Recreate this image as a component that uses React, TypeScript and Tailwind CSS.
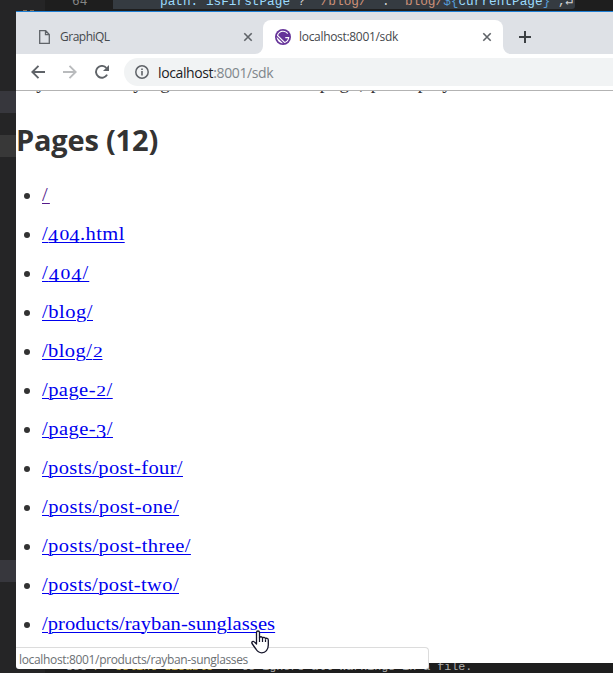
import React from "react";

const serif = "font-['Liberation_Serif',Georgia,serif]";
const sans = "font-['Open_Sans','Segoe_UI',sans-serif]";

function OldStyleDigit({ d }: { d: string }) {
  const low = d === "3" || d === "4";
  return (
    <span className={low ? "relative top-[3px] inline-block" : "inline-block scale-x-[1.25] px-[1.1px] text-[14.5px]"}>
      {d}
    </span>
  );
}

function PageLink({ path, spacing, visited }: { path: string; spacing: string; visited?: boolean }) {
  return (
    <a href="#" className={`mb-[2px] flex origin-left scale-x-[1.08] items-baseline ${spacing} ${visited ? "text-[#551a8b]" : "text-[#0000ee]"}`}>
      {path.split(/(\d+)/).filter(Boolean).map((part, i) =>
        /\d/.test(part) ? (
          <span key={i} className="h-[17px] border-b border-current leading-[16px]">
            {part.split("").map((d, j) => <OldStyleDigit key={j} d={d} />)}
          </span>
        ) : (
          <span key={i} className="leading-[22px] underline decoration-1 underline-offset-[2px]">{part}</span>
        )
      )}
    </a>
  );
}

const pages = [
  { path: "/", spacing: "tracking-[2px]", visited: true },
  { path: "/404.html", spacing: "tracking-[0.36px]" },
  { path: "/404/", spacing: "tracking-[0.95px]" },
  { path: "/blog/", spacing: "tracking-[0.48px]" },
  { path: "/blog/2", spacing: "tracking-[0.37px]" },
  { path: "/page-2/", spacing: "tracking-[0.41px]" },
  { path: "/page-3/", spacing: "tracking-[0.43px]" },
  { path: "/posts/post-four/", spacing: "tracking-[0.35px]" },
  { path: "/posts/post-one/", spacing: "tracking-[0.41px]" },
  { path: "/posts/post-three/", spacing: "tracking-[0.39px]" },
  { path: "/posts/post-two/", spacing: "tracking-[0.34px]" },
  { path: "/products/rayban-sunglasses", spacing: "tracking-[0.06px]" },
];

function Close() {
  return (
    <svg width="10" height="10" viewBox="0 0 10 10" className="shrink-0">
      <path d="M1.3 1.3l7.4 7.4M8.7 1.3L1.3 8.7" stroke="#5f6368" strokeWidth="1.6" />
    </svg>
  );
}

function GatsbyMark() {
  return (
    <svg width="16" height="16" viewBox="0 0 28 28" className="shrink-0">
      <circle cx="14" cy="14" r="14" fill="#639" />
      <path
        fill="#fff"
        d="M6.2 21.8C4.1 19.7 3 16.9 3 14.2L13.9 25c-2.8-.1-5.6-1.1-7.7-3.2zm10.2 2.9L3.3 11.6C4.4 6.7 8.8 3 14 3c3.7 0 6.9 1.8 8.9 4.5l-1.5 1.3C19.7 6.5 17 5 14 5c-3.9 0-7.2 2.5-8.5 6L17 22.5c2.9-1 5.1-3.5 5.8-6.5H18v-2h7c0 5.2-3.7 9.6-8.6 10.7z"
      />
    </svg>
  );
}

function Tabs() {
  return (
    <div className="flex h-[42px] items-end bg-[#dee1e6] text-[#45494d]">
      <div className="flex h-[34px] w-[247px] items-center pr-[10px] pl-[23px]">
        <svg width="11" height="14" viewBox="0 0 11 14" className="mr-[10px] shrink-0" fill="none" stroke="#5f6368" strokeWidth="1.3">
          <path d="M.7.7h6L10.3 4.5v8.8H.7zM6.5.7v4h3.8" />
        </svg>
        <span className="flex-1 text-[12px] tracking-[-0.5px]">GraphiQL</span>
        <Close />
      </div>
      <div className="relative flex h-[34px] w-[240px] items-center rounded-t-[8px] bg-white pr-[11px] pl-[12px]">
        <svg width="8" height="8" viewBox="0 0 8 8" className="absolute bottom-0 -left-2"><path d="M8 0v8H0a8 8 0 008-8z" fill="#fff" /></svg>
        <svg width="8" height="8" viewBox="0 0 8 8" className="absolute -right-2 bottom-0"><path d="M0 0v8h8a8 8 0 01-8-8z" fill="#fff" /></svg>
        <GatsbyMark />
        <span className="ml-[8px] flex-1 text-[12px] tracking-[-0.31px]">localhost:8001/sdk</span>
        <Close />
      </div>
      <svg width="12" height="12" viewBox="0 0 12 12" className="mb-[11px] ml-[16px]">
        <path d="M6 0v12M0 6h12" stroke="#3c4043" strokeWidth="2" />
      </svg>
    </div>
  );
}

function Toolbar() {
  return (
    <div className="flex h-[37px] items-center border-b border-[#b3b3b3] bg-white">
      <svg width="14" height="14" viewBox="0 0 14 14" className="ml-[15px]" fill="none" stroke="#5f6368" strokeWidth="1.9">
        <path d="M14 7H1.5M7.5 .8L1.3 7l6.2 6.2" />
      </svg>
      <svg width="14" height="14" viewBox="0 0 14 14" className="ml-[18px]" fill="none" stroke="#b9bbbd" strokeWidth="1.9">
        <path d="M0 7h12.5M6.5 .8L12.7 7l-6.2 6.2" />
      </svg>
      <svg width="14" height="14" viewBox="0 0 14 14" className="ml-[18px]">
        <path d="M12.1 9.6A5.9 5.9 0 1 1 11.4 3" fill="none" stroke="#5f6368" strokeWidth="1.9" />
        <path d="M14 0v6H8z" fill="#5f6368" />
      </svg>
      <div className="ml-[15px] flex h-[28px] flex-1 items-center rounded-l-full bg-[#f1f3f4] pl-[11px]">
        <svg width="14" height="14" viewBox="0 0 14 14">
          <circle cx="7" cy="7" r="6.2" fill="none" stroke="#5f6368" strokeWidth="1.5" />
          <path d="M7 6v4.4M7 3.4v1.6" stroke="#5f6368" strokeWidth="1.6" />
        </svg>
        <span className="ml-[9px] text-[14px] tracking-[-0.38px] text-[#80868b]">
          <span className="text-[#202124]">localhost</span>:8001/sdk
        </span>
      </div>
    </div>
  );
}

function HandCursor() {
  return (
    <svg width="18" height="24" viewBox="0 0 18 24" className="absolute top-[630px] left-[251px]">
      <path
        d="M5.5 14V2.5a1.5 1.5 0 013 0V8c.2-1.8 3-1.6 3 .3.3-1.4 3-1.2 3 .6.5-1 2.8-.8 2.8 1v5.1c0 4.600-2.700 7.800-6.500 7.800-3 0-4.500-1.300-5.900-3.800L1 13.500c-.8-1.600 1.100-2.800 2.300-1.600z"
        fill="#fff" stroke="#15152a" strokeWidth="1.3" strokeLinejoin="round"
      />
      <path d="M8.500 7.500v4.500M11.500 8.500V12M14.500 9.500V12" stroke="#15152a" strokeWidth="1.200" />
    </svg>
  );
}

export default function App() {
  return (
    <div className={`relative flex h-[673px] w-[613px] flex-col overflow-hidden bg-[#1e1e1e] ${sans}`}>
      <div className="flex h-[11px] overflow-hidden font-['Liberation_Mono',monospace] text-[12.75px] leading-[16px] whitespace-pre">
        <div className="flex w-[45px] items-end gap-[3px] bg-[#252526] pl-[23px]">
          <div className="h-px w-[4px] bg-[#8a6f50]" />
          <div className="h-px w-[4px] bg-[#8a6f50]" />
        </div>
        <div className="w-[68px] pl-[27px] text-[#858585]"><div className="-mt-[6px]">64</div></div>
        <div className="h-[9px] w-[462px] rounded-br-[3px] bg-[#353b41] pl-[47px] text-[#9cdcfe]">
          <div className="-mt-[6px]">
            path: isFirstPage <span className="text-[#d4d4d4]">?</span>{" "}
            <span className="text-[#ce9178]">`/blog/`</span> <span className="text-[#d4d4d4]">:</span>{" "}
            <span className="text-[#ce9178]">`blog/</span><span className="text-[#569cd6]">{"${"}</span>currentPage<span className="text-[#569cd6]">{"}"}</span><span className="text-[#ce9178]">`</span><span className="text-[#d4d4d4]">,↵</span>
          </div>
        </div>
      </div>
      <div className="flex h-[652px]">
        <div className="w-4 shrink-0 bg-[#252526]">
          <div className="mt-[80px] h-[22px] bg-[#37373d]" />
          <div className="mt-[22px] h-[22px] bg-[#383838]" />
          <div className="mt-[403px] h-[22px] bg-[#37373d]" />
        </div>
        <div className="flex min-w-0 flex-1 flex-col border-t border-[#1f7fd4] bg-white">
          <Tabs />
          <Toolbar />
          <main className="flex-1 overflow-hidden text-[#333]">
            <p className={`-mt-[19px] h-[39px] text-[19px] leading-[22px] tracking-[0.95px] whitespace-nowrap ${serif}`}>
              If you were trying to reach another page, perhaps you can find it below.
            </p>
            <h1 className="h-[65px] text-[29px] leading-[58px] font-bold tracking-[-0.2px]">Pages (12)</h1>
            <ul className={`text-[19px] ${serif}`}>
              {pages.map((p) => (
                <li key={p.path} className="flex h-[39px] items-center pl-[8px]">
                  <span className="mr-[12px] size-[6px] rounded-full bg-[#333]" />
                  <PageLink {...p} />
                </li>
              ))}
            </ul>
          </main>
        </div>
      </div>
      <div className="flex h-[10px] overflow-hidden">
        <div className="w-[45px] shrink-0 bg-[#252526]" />
        <div className="-mt-[3px] pl-[21px] font-['Liberation_Mono',monospace] text-[11.68px] leading-[14px] whitespace-pre text-[#b0b0b0]">
          Use <span className="text-[#d7ba4a]">/* eslint-disable */</span> to ignore all warnings in a file.
        </div>
      </div>
      <div className="absolute top-[647px] left-[16px] h-[22px] w-[413px] rounded-tr-[4px] rounded-b-[3px] border-t border-r border-[#dcdcdc] bg-white pl-[3px] text-[12px] leading-[23px] tracking-[-0.34px] text-[#6b6f73]">
        localhost:8001/products/rayban-sunglasses
      </div>
      <HandCursor />
    </div>
  );
}
